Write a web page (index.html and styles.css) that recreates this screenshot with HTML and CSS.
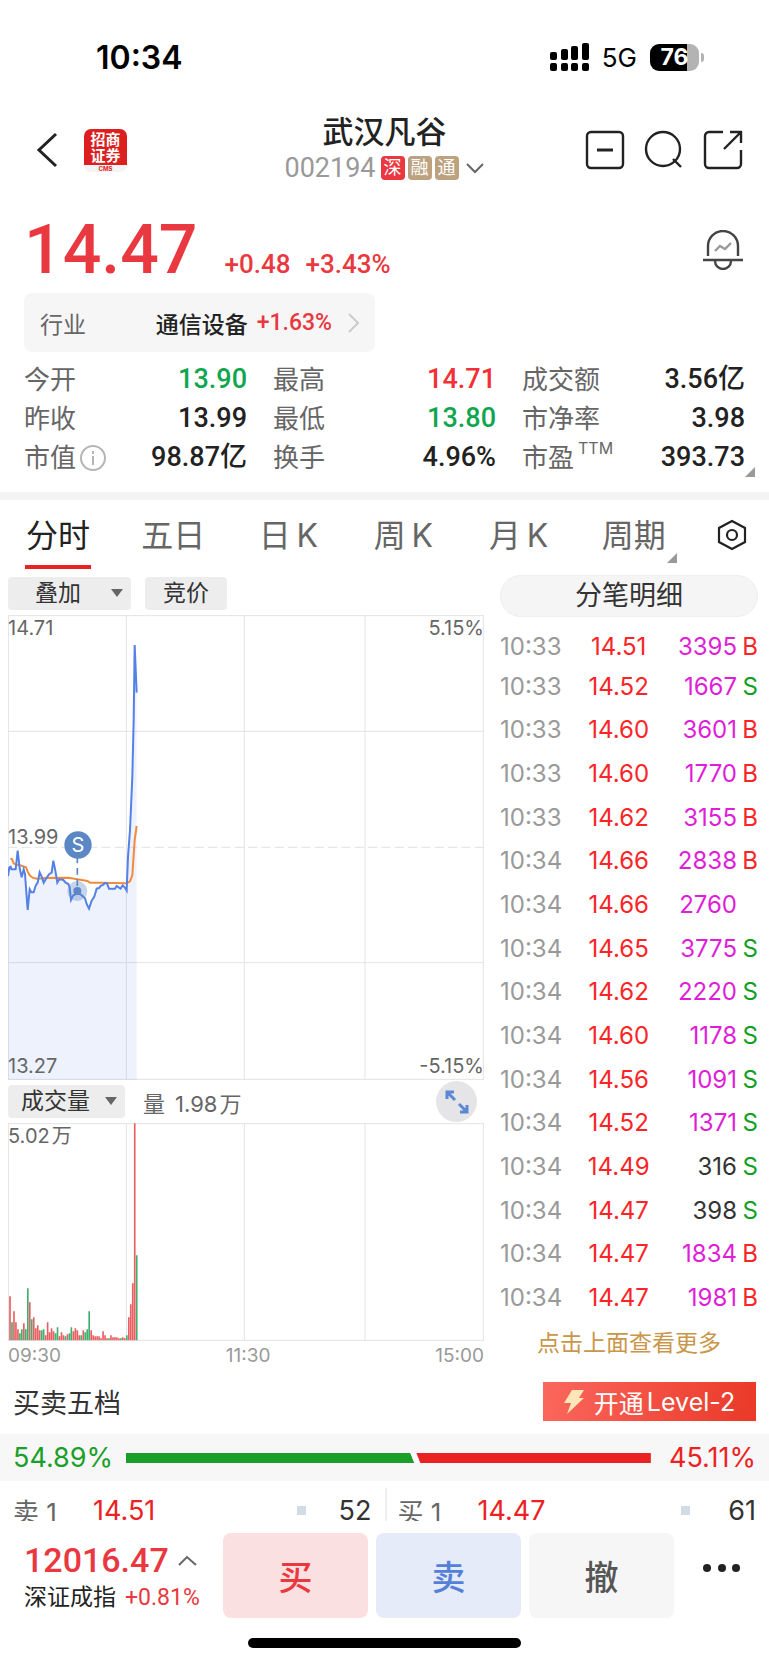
FILE: index.html
```html
<!DOCTYPE html>
<html lang="zh-CN">
<head>
    <meta charset="UTF-8">
    <meta name="viewport" content="width=device-width, initial-scale=1.0">
    <title>武汉凡谷 002194</title>
    <link rel="stylesheet" href="styles.css">
</head>
<body>
    <div class="status-bar">
        <span class="clock">10:34</span>
        <div class="status-icons">
            <svg class="signal" width="39" height="28" viewBox="0 0 39 28" fill="#000">
                <rect x="0" y="9" width="7" height="8" rx="2"/><rect x="11" y="6" width="7" height="11" rx="2"/>
                <rect x="21" y="3" width="7" height="14" rx="2"/><rect x="32" y="0" width="7" height="17" rx="2"/>
                <rect x="0" y="20" width="7" height="8" rx="2"/><rect x="11" y="20" width="7" height="8" rx="2"/>
                <rect x="21" y="20" width="7" height="8" rx="2"/><rect x="32" y="20" width="7" height="8" rx="2"/>
            </svg>
            <span class="network">5G</span>
            <span class="battery">76</span>
        </div>
    </div>

    <header class="header">
        <div class="header-left">
            <button class="icon-btn" aria-label="返回">
                <svg width="22" height="36" viewBox="0 0 22 36" fill="none" stroke="#222" stroke-width="3"><path d="M20 2 3 18l17 16"/></svg>
            </button>
            <a class="logo" href="#"><span>招商<br>证券</span><small>CMS</small></a>
        </div>
        <div class="header-title">
            <h1>武汉凡谷</h1>
            <div class="code">
                <span class="code-number">002194</span>
                <span class="badge badge-red">深</span>
                <span class="badge">融</span>
                <span class="badge">通</span>
                <svg width="20" height="12" viewBox="0 0 20 12" fill="none" stroke="#666" stroke-width="2"><path d="M2 2l8 8 8-8"/></svg>
            </div>
        </div>
        <div class="header-right">
            <button class="icon-btn" aria-label="删除自选">
                <svg width="40" height="40" viewBox="0 0 40 40" fill="none" stroke="#222" stroke-width="2.4"><rect x="2" y="2" width="36" height="36" rx="4"/><path d="M12 20h16" stroke-width="3"/></svg>
            </button>
            <button class="icon-btn" aria-label="搜索">
                <svg width="40" height="40" viewBox="0 0 40 40" fill="none" stroke="#222" stroke-width="2.4"><circle cx="19" cy="19" r="17"/><path d="M29 29l8 8"/></svg>
            </button>
            <button class="icon-btn" aria-label="分享">
                <svg width="40" height="40" viewBox="0 0 40 40" fill="none" stroke="#222" stroke-width="2.4"><path d="M20 2H6a4 4 0 0 0-4 4v28a4 4 0 0 0 4 4h28a4 4 0 0 0 4-4V20M27 2h11v11M38 2 21 19"/></svg>
            </button>
        </div>
    </header>

    <section class="quote">
        <div class="price-row">
            <span class="price">14.47</span>
            <span class="change">+0.48</span>
            <span class="change">+3.43%</span>
            <button class="icon-btn bell" aria-label="价格提醒">
                <svg width="40" height="40" viewBox="0 0 40 40" fill="none" stroke="#444" stroke-width="2.4"><path d="M5 26V16a15 15 0 0 1 30 0v10M0 30h40"/><path d="M12 31a8 8 0 0 0 16 0"/><path d="M12 21l5-5 5 3 6-6" stroke="#999"/></svg>
            </button>
        </div>
        <a class="industry" href="#">
            <span class="industry-label">行业</span>
            <span class="industry-name">通信设备</span>
            <span class="industry-change">+1.63%</span>
            <svg width="11" height="20" viewBox="0 0 11 20" fill="none" stroke="#ccc" stroke-width="2"><path d="M1 1l9 9-9 9"/></svg>
        </a>
        <dl class="stats">
            <div><dt>今开</dt><dd class="down">13.90</dd></div>
            <div><dt>最高</dt><dd class="up">14.71</dd></div>
            <div><dt>成交额</dt><dd>3.56亿</dd></div>
            <div><dt>昨收</dt><dd>13.99</dd></div>
            <div><dt>最低</dt><dd class="down">13.80</dd></div>
            <div><dt>市净率</dt><dd>3.98</dd></div>
            <div>
                <dt>市值<svg class="info" width="26" height="26" viewBox="0 0 26 26" fill="none" stroke="#b5b5b5" stroke-width="2"><circle cx="13" cy="13" r="12"/><path d="M13 11v9M13 6v3"/></svg></dt>
                <dd>98.87亿</dd>
            </div>
            <div><dt>换手</dt><dd>4.96%</dd></div>
            <div class="corner"><dt>市盈<sup>TTM</sup></dt><dd>393.73</dd></div>
        </dl>
    </section>

    <nav class="tabs">
        <button class="tab active">分时</button>
        <button class="tab">五日</button>
        <button class="tab">日&thinsp;K</button>
        <button class="tab">周&thinsp;K</button>
        <button class="tab">月&thinsp;K</button>
        <button class="tab corner">周期</button>
        <button class="icon-btn" aria-label="设置">
            <svg width="32" height="32" viewBox="0 0 32 32" fill="none" stroke="#222" stroke-width="2.2"><path d="M16 2l13 7v14l-13 7-13-7V9z"/><circle cx="16" cy="16" r="5"/></svg>
        </button>
    </nav>

    <main class="board">
        <div class="charts">
            <div class="toolbar">
                <div class="select">
                    <select class="overlay-select" aria-label="叠加"><option>叠加</option></select>
                </div>
                <button class="tool-btn">竞价</button>
            </div>
            <div class="chart">
                <svg viewBox="24 45 1428 1395" fill="none">
                    <g stroke="#e3e3e6" stroke-width="3">
                        <path d="M24 47H1452M24 394H1452M24 1088H1452M24 1438H1452"/>
                        <path d="M25 45V1440M379 45V1440M733 45V1440M1095 45V1440M1450 45V1440"/>
                        <path d="M24 742H1452" stroke-dasharray="28 12"/>
                    </g>
                    <path fill="#5b87e8" fill-opacity=".11" d="M24 828 28 802 47 808 53 752 65 832 71 808 83 930 89 868 101 877 119 817 131 848 155 818 160 782 172 848 190 840 209 862 213 900 232 880 250 890 267 926 290 866 314 850 327 866 345 866 368 856 380 872 390 690 397 530 401 360 404 135 410 278V1440H24z"/>
                    <polyline stroke="#f28a3c" stroke-width="6" points="31,776 36,777 41,790 47,794 60,796 78,802 83,815 89,826 98,833 110,836 140,834 205,833 245,840 262,843 270,848 300,848 380,850 390,844 397,826 400,780 404,720 410,678"/>
                    <polyline stroke="#5580e6" stroke-width="6" points="24,828 28,802 32,800 34,808 47,808 53,752 59,805 65,832 71,808 75,822 83,930 89,868 94,877 101,877 107,857 113,848 119,817 126,832 131,848 138,836 148,822 155,818 160,782 166,812 172,848 178,838 190,840 197,848 205,852 209,862 213,900 220,886 232,880 243,884 250,890 255,895 260,912 267,926 275,902 283,890 290,866 297,864 303,857 309,855 314,850 321,850 327,866 345,866 350,858 356,862 362,866 368,856 374,862 380,872 384,770 390,690 397,530 401,360 404,135 410,278"/>
                    <circle cx="232" cy="873" r="30" fill="#5b87c5" fill-opacity=".35"/>
                    <circle cx="232" cy="873" r="12" fill="#5b87c5"/>
                    <path stroke="#5b87c5" stroke-width="5" stroke-dasharray="20 14" d="M232 770V862"/>
                    <circle cx="234" cy="735" r="41" fill="#5b87c5"/>
                    <text class="marker-text" x="234" y="757" text-anchor="middle">S</text>
                </svg>
                <span class="label top-left">14.71</span>
                <span class="label top-right">5.15%</span>
                <span class="label mid-left">13.99</span>
                <span class="label bottom-left">13.27</span>
                <span class="label bottom-right">-5.15%</span>
            </div>
            <div class="volume-bar">
                <div class="select">
                    <select class="volume-select" aria-label="指标"><option>成交量</option></select>
                </div>
                <span class="volume-text">量<span class="volume-number">1.98</span><span class="unit">万</span></span>
                <button class="expand" aria-label="全屏">
                    <svg width="24" height="24" viewBox="0 0 24 24" fill="none" stroke="#5b87d5" stroke-width="3"><path d="M2 9V2h7M2 2l8 8M22 15v7h-7M22 22l-8-8"/></svg>
                </button>
            </div>
            <div class="chart">
                <svg viewBox="24 609 1428 654" fill="none">
                    <g stroke="#e3e3e6" stroke-width="3">
                        <path d="M24 611H1452M24 1261H1452"/>
                        <path d="M25 609V1263M379 609V1263M733 609V1263M1095 609V1263M1450 609V1263"/>
                    </g>
                    <path id="redBars" stroke="#ea5f62" stroke-width="5"/>
                    <path id="greenBars" stroke="#3fb070" stroke-width="5"/>
                </svg>
                <span class="label top-left">5.02<span class="unit">万</span></span>
            </div>
            <div class="times"><span>09:30</span><span>11:30</span><span>15:00</span></div>
        </div>

        <div class="ticks">
            <button class="ticks-title">分笔明细</button>
            <table>
                <tbody>
                    <tr><td>10:33</td><td>14.51</td><td>3395</td><td class="b">B</td></tr>
                    <tr><td>10:33</td><td>14.52</td><td>1667</td><td class="s">S</td></tr>
                    <tr><td>10:33</td><td>14.60</td><td>3601</td><td class="b">B</td></tr>
                    <tr><td>10:33</td><td>14.60</td><td>1770</td><td class="b">B</td></tr>
                    <tr><td>10:33</td><td>14.62</td><td>3155</td><td class="b">B</td></tr>
                    <tr><td>10:34</td><td>14.66</td><td>2838</td><td class="b">B</td></tr>
                    <tr><td>10:34</td><td>14.66</td><td>2760</td><td></td></tr>
                    <tr><td>10:34</td><td>14.65</td><td>3775</td><td class="s">S</td></tr>
                    <tr><td>10:34</td><td>14.62</td><td>2220</td><td class="s">S</td></tr>
                    <tr><td>10:34</td><td>14.60</td><td>1178</td><td class="s">S</td></tr>
                    <tr><td>10:34</td><td>14.56</td><td>1091</td><td class="s">S</td></tr>
                    <tr><td>10:34</td><td>14.52</td><td>1371</td><td class="s">S</td></tr>
                    <tr><td>10:34</td><td>14.49</td><td class="small">316</td><td class="s">S</td></tr>
                    <tr><td>10:34</td><td>14.47</td><td class="small">398</td><td class="s">S</td></tr>
                    <tr><td>10:34</td><td>14.47</td><td>1834</td><td class="b">B</td></tr>
                    <tr><td>10:34</td><td>14.47</td><td>1981</td><td class="b">B</td></tr>
                </tbody>
            </table>
            <a class="more" href="#">点击上面查看更多</a>
        </div>
    </main>

    <section class="depth">
        <div class="depth-head">
            <h2>买卖五档</h2>
            <button class="level2">
                <svg width="20" height="24" viewBox="0 0 20 24"><path fill="#ffe6b8" d="M8 0h12l-5 8h5L3 24l4-11H0z"/></svg>
                <span>开通</span>Level-2
            </button>
        </div>
        <div class="ratio">
            <span class="ratio-sell">54.89%</span>
            <svg class="ratio-bar" viewBox="0 0 526 10" preserveAspectRatio="none">
                <path fill="#1a9f29" d="M0 0h285l4 10H0z"/>
                <path fill="#fff" d="M285 0h6l4 10h-6z"/>
                <path fill="#eb2224" d="M291 0h235v10H295z"/>
            </svg>
            <span class="ratio-buy">45.11%</span>
        </div>
        <div class="orders">
            <div class="order"><span class="side">卖 1</span><span class="order-price">14.51</span><i class="dot"></i><span class="amount">52</span></div>
            <div class="order"><span class="side">买 1</span><span class="order-price">14.47</span><i class="dot"></i><span class="amount">61</span></div>
        </div>
    </section>

    <footer class="footer">
        <div class="trade">
            <div class="index">
                <div class="index-value">12016.47
                    <svg width="19" height="12" viewBox="0 0 19 12" fill="none" stroke="#666" stroke-width="2"><path d="M1 11l8-8 9 8"/></svg>
                </div>
                <div class="index-name">深证成指<span>+0.81%</span></div>
            </div>
            <button class="trade-btn buy">买</button>
            <button class="trade-btn sell">卖</button>
            <button class="trade-btn cancel">撤</button>
            <button class="icon-btn dots" aria-label="更多">
                <svg width="38" height="8" viewBox="0 0 38 8" fill="#222"><circle cx="4" cy="4" r="4"/><circle cx="19" cy="4" r="4"/><circle cx="33" cy="4" r="4"/></svg>
            </button>
        </div>
        <div class="home-indicator"></div>
    </footer>

    <script>
        // 每分钟成交量,正数为红,负数为绿
        const volumes = [
            44, -18, 29, 18, 11, -7, -11, 17, -11, -52, 38, -21, 23, 12, 15, 10, -10, -11, 5, 18,
            8, 12, 9, -7, -13, 4, 8, 5, -4, 6, -7, -13, 9, 12, 10, 5, -5, 10, -8, -11,
            -29, 10, 5, 4, 4, 4, 2, 9, 5, 2, -2, 5, 3, 3, 3, 2, -2, 3, 2, -5,
            23, 36, 57, 217, -85
        ];
        let red = '';
        let green = '';
        volumes.forEach(function (v, i) {
            const bar = 'M' + (30 + i * 5.94).toFixed(1) + ' 1261v' + (-Math.abs(v) * 3);
            if (v > 0) {
                red += bar;
            } else {
                green += bar;
            }
        });
        document.getElementById('redBars').setAttribute('d', red);
        document.getElementById('greenBars').setAttribute('d', green);
    </script>
</body>
</html>
```
FILE: styles.css
```css
* {
    box-sizing: border-box;
}
body {
    margin: 0;
    background: #fff;
    color: #222;
    font-family: Inter, "Noto Sans CJK SC", sans-serif;
    font-size: 24px;
}
h1, h2, dl, dd {
    margin: 0;
    font-weight: 400;
}
a {
    color: inherit;
    text-decoration: none;
}
button, select {
    border: none;
    margin: 0;
    padding: 0;
    background: none;
    color: inherit;
    font-family: inherit;
    cursor: pointer;
}
.icon-btn {
    display: flex;
}
.status-bar {
    display: flex;
    justify-content: space-between;
    align-items: center;
    height: 114px;
    padding: 0 70px 0 96px;
    color: #000;
}
.clock {
    font-size: 32px;
    font-weight: 600;
}
.status-icons {
    display: flex;
    align-items: center;
    gap: 13px;
}
.network {
    font-size: 26px;
}
.battery {
    position: relative;
    width: 49px;
    height: 27px;
    border-radius: 9px;
    background: linear-gradient(to right, #000 76%, #b3b3b3 76%);
    color: #fff;
    font-size: 23px;
    font-weight: 700;
    line-height: 27px;
    text-align: center;
}
.battery::after {
    content: "";
    position: absolute;
    top: 9px;
    right: -5px;
    width: 3px;
    height: 9px;
    border-radius: 0 3px 3px 0;
    background: #b3b3b3;
}
.header {
    display: grid;
    grid-template-columns: 1fr auto 1fr;
    align-items: center;
    height: 68px;
    padding: 0 26px;
}
.header-left, .header-right {
    display: flex;
    align-items: center;
}
.header-left {
    gap: 26px;
    padding-left: 10px;
}
.header-right {
    justify-content: flex-end;
    gap: 19px;
}
.logo {
    width: 43px;
    height: 43px;
    overflow: hidden;
    border-radius: 7px;
    background: linear-gradient(#dc2020 36px, #f4f4f4 36px);
    color: #fff;
    font-size: 15px;
    font-weight: 700;
    line-height: 16px;
    text-align: center;
}
.logo span {
    display: block;
    padding-top: 3px;
}
.logo small {
    display: block;
    color: #dc2020;
    font-size: 6px;
    line-height: 9px;
}
.header-title h1 {
    font-size: 31px;
    font-weight: 500;
    line-height: 36px;
    text-align: center;
}
.code {
    display: flex;
    align-items: center;
    gap: 3px;
    height: 36px;
}
.code-number {
    margin-right: 2px;
    color: #999;
    font-family: Roboto, sans-serif;
    font-size: 27px;
}
.badge {
    width: 24px;
    height: 24px;
    border-radius: 4px;
    background: #bda27f;
    color: #fff;
    font-size: 18px;
    line-height: 24px;
    text-align: center;
}
.badge-red {
    background: #ea3840;
}
.code svg {
    margin-left: 3px;
}
.quote {
    padding: 28px 24px 15px;
    border-bottom: 8px solid #f4f4f4;
}
.price-row {
    display: flex;
    align-items: baseline;
    height: 83px;
    color: #ea3840;
    font-family: Roboto, sans-serif;
    font-weight: 500;
}
.price {
    margin-right: 27px;
    font-size: 68px;
    line-height: 80px;
}
.change {
    margin-right: 15px;
    font-size: 26px;
}
.bell {
    align-self: flex-start;
    margin: 20px 2px 0 auto;
}
.industry {
    display: flex;
    align-items: center;
    width: 351px;
    height: 59px;
    padding: 0 16px;
    border-radius: 8px;
    background: #f6f6f6;
    font-size: 23px;
}
.industry-label {
    color: #666;
}
.industry-name {
    margin-left: auto;
    font-weight: 500;
}
.industry-change {
    margin: 0 16px 0 9px;
    color: #ea3840;
    font-family: Roboto, sans-serif;
    font-weight: 500;
}
.stats {
    display: grid;
    grid-template-columns: repeat(3, 1fr);
    column-gap: 26px;
    margin-top: 8px;
}
.stats div {
    display: flex;
    justify-content: space-between;
    align-items: center;
    height: 39px;
    line-height: 39px;
}
.stats dt {
    display: flex;
    align-items: center;
    color: #666;
    font-size: 26px;
}
.stats dd {
    font-family: Roboto, "Noto Sans CJK SC", sans-serif;
    font-size: 27px;
    font-weight: 500;
}
.stats .up {
    color: #f23035;
}
.stats .down {
    color: #10a650;
}
.info {
    margin-left: 4px;
}
.stats sup {
    align-self: flex-start;
    margin-left: 4px;
    font-size: 16px;
    line-height: 20px;
}
.corner {
    position: relative;
}
.corner::after {
    content: "";
    position: absolute;
    right: -10px;
    bottom: 0;
    border-left: 10px solid transparent;
    border-bottom: 10px solid #999;
}
.tabs {
    display: flex;
    justify-content: space-between;
    align-items: center;
    height: 70px;
    padding: 0 21px 0 25px;
}
.tab {
    min-width: 66px;
    height: 68px;
    border-bottom: 4px solid transparent;
    color: #666;
    font-size: 32px;
}
.tab.active {
    border-bottom-color: #eb2224;
    color: #222;
}
.tab.corner::after {
    right: -10px;
    bottom: 2px;
}
.board {
    display: grid;
    grid-template-columns: minmax(0, 476fr) minmax(0, 258fr);
    column-gap: 16px;
    padding: 5px 11px 0 8px;
}
.toolbar {
    display: flex;
    gap: 14px;
    height: 40px;
    padding-top: 2px;
}
.select {
    position: relative;
}
.select::after {
    content: "";
    position: absolute;
    top: 12px;
    right: 8px;
    border: 6px solid transparent;
    border-top: 8px solid #666;
    border-bottom: 0;
    pointer-events: none;
}
.select select, .tool-btn {
    display: block;
    height: 33px;
    border-radius: 4px;
    background: #ededed;
    color: #333;
    font-size: 23px;
    line-height: 33px;
}
.select select {
    appearance: none;
}
.overlay-select {
    width: 123px;
    padding-left: 27px;
}
.volume-select {
    width: 117px;
    padding-left: 13px;
}
.tool-btn {
    width: 82px;
}
.chart {
    position: relative;
}
.chart svg {
    display: block;
    width: 100%;
}
.marker-text {
    fill: #fff;
    font-size: 60px;
}
.label {
    position: absolute;
    color: #666;
    font-size: 20px;
    line-height: 26px;
}
.top-left {
    top: 0;
    left: 0;
}
.top-right {
    top: 0;
    right: 0;
}
.mid-left {
    top: 45%;
    left: 0;
}
.bottom-left {
    bottom: 1px;
    left: 0;
}
.bottom-right {
    right: 0;
    bottom: 1px;
}
.unit {
    margin-left: 2px;
}
.volume-bar {
    display: flex;
    align-items: center;
    height: 43px;
}
.volume-text {
    margin-left: 18px;
    color: #666;
    font-size: 22px;
}
.volume-number {
    margin-left: 10px;
}
.expand {
    display: flex;
    justify-content: center;
    align-items: center;
    width: 41px;
    height: 41px;
    margin: 0 7px 0 auto;
    border-radius: 50%;
    background: #e5e5e8;
}
.times {
    display: flex;
    justify-content: space-between;
    color: #999;
    font-size: 19px;
    line-height: 30px;
}
.ticks-title {
    display: block;
    width: 100%;
    height: 42px;
    border: 1px solid #eee;
    border-radius: 21px;
    background: #f5f5f5;
    color: #333;
    font-size: 27px;
    line-height: 38px;
}
.ticks table {
    width: 100%;
    margin-top: 11px;
    border-collapse: collapse;
    font-size: 24px;
}
.ticks tr {
    height: 44px;
}
.ticks tr:first-child {
    height: 36px;
}
.ticks tr:nth-child(3n) {
    height: 43px;
}
.ticks td {
    padding: 0;
    color: #e01ed8;
    text-align: right;
}
.ticks td:first-child {
    width: 27%;
    color: #999;
    text-align: left;
}
.ticks td:nth-child(2) {
    width: 38%;
    color: #fb2528;
    text-align: center;
}
.ticks td:last-child {
    width: 21px;
}
.ticks td.small {
    color: #333;
}
.ticks td.b {
    color: #fb2528;
}
.ticks td.s {
    color: #0fa01f;
}
.more {
    display: block;
    color: #c9964a;
    font-size: 23px;
    line-height: 48px;
    text-align: center;
}
.depth-head {
    display: flex;
    justify-content: space-between;
    align-items: center;
    height: 63px;
    padding: 0 13px 2px;
}
.depth-head h2 {
    color: #333;
    font-size: 27px;
}
.level2 {
    display: flex;
    justify-content: center;
    align-items: center;
    width: 213px;
    height: 39px;
    background: linear-gradient(100deg, #fb675d, #ea3928);
    color: #fff;
    font-size: 25px;
}
.level2 span {
    margin: 0 3px 0 10px;
}
.ratio {
    display: flex;
    align-items: center;
    gap: 13px;
    height: 47px;
    padding: 0 13px;
    background: #f7f7f7;
    font-size: 27px;
}
.ratio-bar {
    flex: 1;
    min-width: 0;
    height: 10px;
}
.ratio-sell {
    color: #1a9f29;
}
.ratio-buy {
    margin-left: 5px;
    color: #eb2224;
}
.orders {
    display: grid;
    grid-template-columns: 1fr 1fr;
    height: 40px;
    overflow: hidden;
}
.order {
    display: flex;
    align-items: center;
    height: 58px;
    padding: 0 13px;
    font-size: 27px;
}
.order + .order {
    height: 44px;
    margin-top: 7px;
    padding-left: 11px;
    border-left: 2px solid #eee;
}
.side {
    width: 80px;
    color: #666;
    font-size: 26px;
}
.order-price {
    color: #eb2224;
}
.dot {
    width: 9px;
    height: 9px;
    margin-left: auto;
    background: #d3dbe5;
}
.amount {
    width: 66px;
    color: #333;
    text-align: right;
}
.footer {
    position: sticky;
    bottom: 0;
    background: #fff;
}
.trade {
    display: flex;
    gap: 8px;
    padding: 12px 24px 20px;
}
.index {
    width: 191px;
}
.index-value {
    display: flex;
    align-items: center;
    gap: 9px;
    height: 53px;
    color: #ea3840;
    font-family: Roboto, sans-serif;
    font-size: 34px;
    font-weight: 500;
}
.index-name {
    font-size: 23px;
    line-height: 22px;
    white-space: nowrap;
}
.index-name span {
    margin-left: 9px;
    color: #ea3840;
    font-family: Roboto, sans-serif;
}
.trade-btn {
    flex: 1;
    height: 85px;
    border-radius: 8px;
    font-size: 34px;
    font-weight: 500;
}
.buy {
    background: #fbe0e2;
    color: #ea3840;
}
.sell {
    background: #e5ebf8;
    color: #5580d8;
}
.cancel {
    background: #f6f6f6;
    color: #555;
}
.dots {
    width: 63px;
    justify-content: flex-end;
    padding: 31px 4px 0 0;
}
.home-indicator {
    width: 273px;
    height: 10px;
    margin: 0 auto;
    border-radius: 5px;
    background: #000;
}
.footer::after {
    content: "";
    display: block;
    height: 16px;
}
```
